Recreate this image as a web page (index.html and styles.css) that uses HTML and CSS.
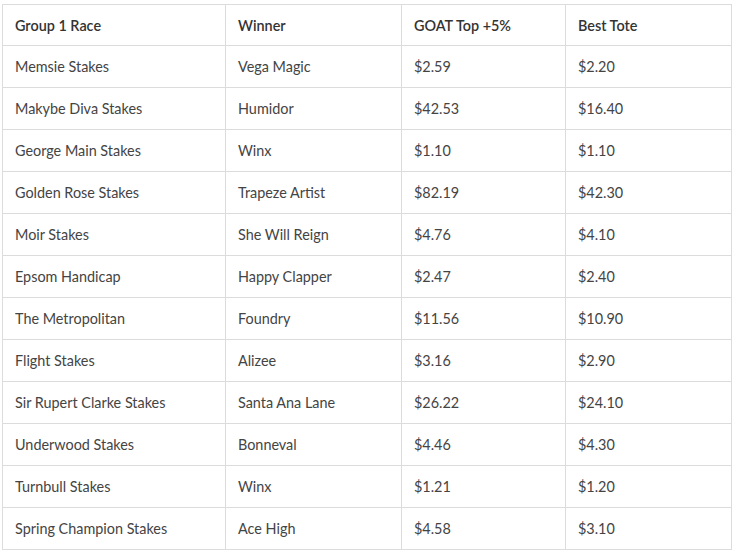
FILE: index.html
```html
<!DOCTYPE html>
<html>
<head>
<meta charset="utf-8">
<link rel="stylesheet" href="styles.css">
</head>
<body>
<table class="races">
  <colgroup>
    <col class="c1"><col class="c2"><col class="c3"><col class="c4">
  </colgroup>
  <thead>
    <tr><th>Group 1 Race</th><th>Winner</th><th>GOAT Top +5%</th><th>Best Tote</th></tr>
  </thead>
  <tbody>
    <tr><td>Memsie Stakes</td><td>Vega Magic</td><td>$2.59</td><td>$2.20</td></tr>
    <tr><td>Makybe Diva Stakes</td><td>Humidor</td><td>$42.53</td><td>$16.40</td></tr>
    <tr><td>George Main Stakes</td><td>Winx</td><td>$1.10</td><td>$1.10</td></tr>
    <tr><td>Golden Rose Stakes</td><td>Trapeze Artist</td><td>$82.19</td><td>$42.30</td></tr>
    <tr><td>Moir Stakes</td><td>She Will Reign</td><td>$4.76</td><td>$4.10</td></tr>
    <tr><td>Epsom Handicap</td><td>Happy Clapper</td><td>$2.47</td><td>$2.40</td></tr>
    <tr><td>The Metropolitan</td><td>Foundry</td><td>$11.56</td><td>$10.90</td></tr>
    <tr><td>Flight Stakes</td><td>Alizee</td><td>$3.16</td><td>$2.90</td></tr>
    <tr><td>Sir Rupert Clarke Stakes</td><td>Santa Ana Lane</td><td>$26.22</td><td>$24.10</td></tr>
    <tr><td>Underwood Stakes</td><td>Bonneval</td><td>$4.46</td><td>$4.30</td></tr>
    <tr><td>Turnbull Stakes</td><td>Winx</td><td>$1.21</td><td>$1.20</td></tr>
    <tr><td>Spring Champion Stakes</td><td>Ace High</td><td>$4.58</td><td>$3.10</td></tr>
  </tbody>
</table>
</body>
</html>
```
FILE: styles.css
```css
html, body {
  margin: 0;
  padding: 0;
  background: #fff;
}
body {
  padding: 4px 0 0 2px;
  font-family: Lato, "Liberation Sans", sans-serif;
  font-size: 14.4px;
  color: #444;
}
.races {
  border-collapse: collapse;
  table-layout: fixed;
  width: 729px;
}
.c1 { width: 223px; }
.c2 { width: 176px; }
.c3 { width: 164px; }
.c4 { width: 166px; }
.races th,
.races td {
  border: 1px solid #dcdcdc;
  text-align: left;
  padding: 0 0 0 12px;
  white-space: nowrap;
}
.races th {
  height: 40px;
  font-weight: 600;
  color: #333;
}
.races td {
  height: 41px;
  font-weight: normal;
  color: #444;
}
```
